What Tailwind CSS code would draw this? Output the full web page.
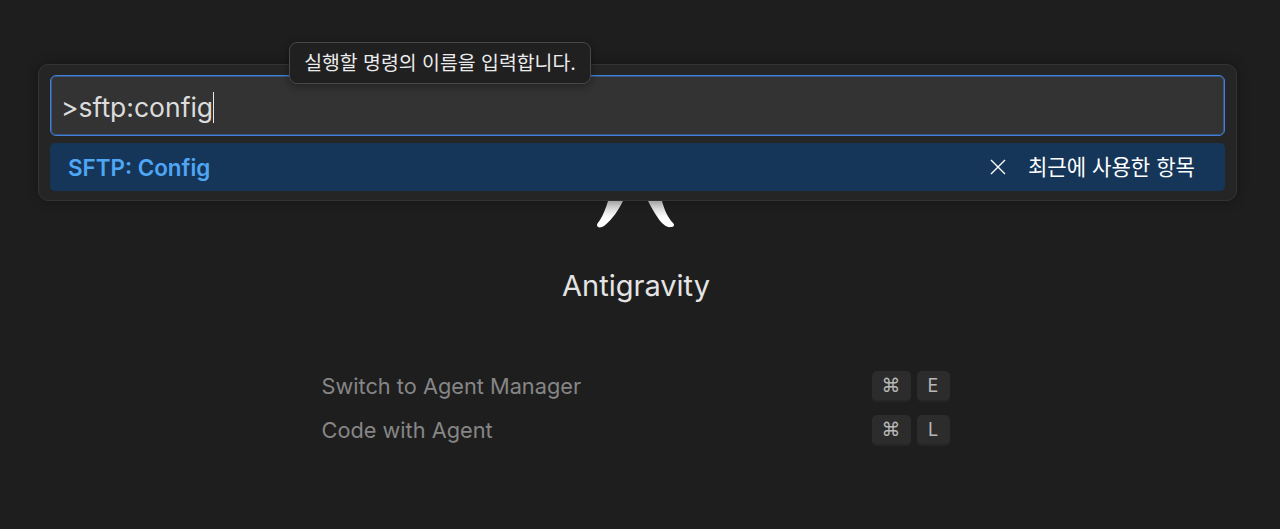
<!DOCTYPE html>
<html lang="ko">
  <head>
    <meta charset="UTF-8" />
    <meta name="viewport" content="width=device-width, initial-scale=1.0" />
    <title>Antigravity</title>
    <script src="https://cdn.jsdelivr.net/npm/@tailwindcss/browser@4"></script>
  </head>
  <body class="bg-[#1e1e1e] font-['Inter','Noto_Sans_CJK_KR',sans-serif] overflow-hidden">
    <div class="relative h-[529px] w-[1280px]">
      <!-- watermark behind the palette -->
      <main class="flex flex-col items-center pt-[190px]">
        <svg class="w-[90px] h-[40px] mr-[8px]" viewBox="0 0 90 40">
          <defs>
            <linearGradient id="fade" x1="0" y1="0" x2="0" y2="1">
              <stop offset="0.25" stop-color="#bdbdbd" />
              <stop offset="0.75" stop-color="#ffffff" />
            </linearGradient>
          </defs>
          <path fill="url(#fade)" d="M22 0 L38 0 L32 11 C28 19 22 29 13 36 C10 38 6 38 6 35 C6 33 8 32 9 30 C12 25 15 18 17 11 Z" />
          <path fill="url(#fade)" d="M52 0 L68 0 L71 11 C73 19 77 28 82 33 C84 35 83 37 80 37 C76 38 71 34 67 28 C63 22 60 17 57 11 Z" />
        </svg>
        <h1 class="mt-[38px] mr-[8px] text-[29px] leading-9 text-[#e4e4e4]">Antigravity</h1>
        <div class="mt-[66px] w-[629px] mr-[8px] flex flex-col gap-[11px] text-[21.750px] text-[#868686]">
          <div class="flex items-center justify-between h-[33px]">
            <span>Switch to Agent Manager</span>
            <div class="flex gap-[6px] mr-[1px] text-[17px] text-[#b8b8b8] -mt-[1px]">
              <kbd class="w-[39px] h-[31px] flex items-center justify-center rounded-[5px] bg-[#2c2c2c] border-b-2 border-[#262626] text-[19px] font-['DejaVu_Sans']">⌘</kbd>
              <kbd class="w-[33px] h-[31px] flex items-center justify-center rounded-[5px] bg-[#2c2c2c] border-b-2 border-[#262626] text-[18px] font-['Inter']">E</kbd>
            </div>
          </div>
          <div class="flex items-center justify-between h-[33px]">
            <span>Code with Agent</span>
            <div class="flex gap-[6px] mr-[1px] text-[17px] text-[#b8b8b8] -mt-[1px]">
              <kbd class="w-[39px] h-[31px] flex items-center justify-center rounded-[5px] bg-[#2c2c2c] border-b-2 border-[#262626] text-[19px] font-['DejaVu_Sans']">⌘</kbd>
              <kbd class="w-[33px] h-[31px] flex items-center justify-center rounded-[5px] bg-[#2c2c2c] border-b-2 border-[#262626] text-[18px] font-['Inter']">L</kbd>
            </div>
          </div>
        </div>
      </main>

      <!-- command palette -->
      <div class="absolute left-[38px] top-[64px] w-[1199px] h-[137px] rounded-[10px] bg-[#252525] border border-[#333333] px-[11px] pt-[10px] shadow-[0_0_12px_rgba(0,0,0,0.35)]">
        <div class="h-[61px] rounded-[6px] bg-[#333333] border border-[#4080da] shadow-[inset_0_0_0_1px_rgba(64,128,218,0.45)] flex items-center pl-[10px] pt-[4px]">
          <span class="text-[26.500px] text-[#dcdcdc] leading-none border-r-[1.500px] border-[#e8e8e8] py-[2px]">&gt;sftp:config</span>
        </div>
        <div class="mt-[7px] h-[48px] rounded-[5px] bg-[#153659] flex items-center justify-between pl-[18px] pr-[30px] pt-[1px]">
          <span class="text-[22.400px] font-semibold text-[#4fa6f5]">SFTP: Config</span>
          <div class="flex items-center gap-[22px]">
            <svg class="w-[16px] h-[16px]" viewBox="0 0 16 16" fill="none" stroke="#ffffff" stroke-width="1.400"><path d="M1 1 L15 15 M15 1 L1 15" /></svg>
            <span class="text-[21.100px] text-white">최근에 사용한 항목</span>
          </div>
        </div>
      </div>

      <!-- tooltip -->
      <div class="absolute left-[289px] top-[42px] w-[302px] h-[42px] rounded-[8px] bg-[#202020] border border-[#484848] flex items-center justify-center pt-[2px] text-[19.400px] text-[#ececec] shadow-[0_2px_8px_rgba(0,0,0,0.4)]">실행할 명령의 이름을 입력합니다.</div>
    </div>
  </body>
</html>
